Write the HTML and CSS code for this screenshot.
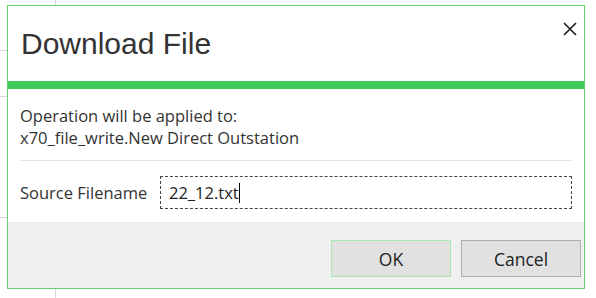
FILE: index.html
```html
<!DOCTYPE html>
<html>
<head>
<meta charset="utf-8" />
<title>Download File</title>
<link rel="stylesheet" href="styles.css">
</head>
<body>
<div class="grid">
<span class="vline"></span>
<span class="hline hline1"></span>
<span class="hline hline2"></span>
<span class="hline hline3"></span>
</div>
<div class="dialog">
<div class="header">
<h1 class="title">Download File</h1>
<span class="close">
<svg width="14" height="14" viewBox="0 0 14 14"><path d="M1 1 L13 13 M13 1 L1 13" stroke="#1a1a1a" stroke-width="1.6" fill="none" /></svg>
</span>
</div>
<div class="bar"></div>
<div class="content">
<p class="info">Operation will be applied to:<br />x70_file_write.New Direct Outstation</p>
<div class="row">
<label class="form_col" for="src">Source Filename</label>
<div class="field"><span class="value">22_12.txt</span><span class="caret"></span></div>
</div>
</div>
<div class="footer">
<button class="btn btn_ok">OK</button>
<button class="btn">Cancel</button>
</div>
</div>
</body>
</html>
```
FILE: styles.css
```css
body {
margin: 0;
width: 596px;
height: 298px;
background: #fff;
font-family: "Open Sans", "Noto Sans", sans-serif;
overflow: hidden;
position: relative; }
.grid .vline {
position: absolute;
left: 55px;
top: 0;
width: 1px;
height: 298px;
background: #d8d8d8; }
.grid .hline {
position: absolute;
left: 0;
width: 8px;
height: 1px;
background: #d8d8d8; }
.hline1 { top: 50px; }
.hline2 { top: 96px; }
.hline3 { top: 217px; }
.dialog {
position: absolute;
left: 7px;
top: 5px;
width: 576px;
height: 282px;
border: 1px solid #5fd36d;
background: #fff;
display: flex;
flex-direction: column; }
.header {
height: 75px;
display: flex;
justify-content: space-between;
align-items: flex-start; }
.title {
margin: 21px 0 0 13px;
font-family: "Liberation Sans", Arial, sans-serif;
font-weight: normal;
font-size: 30px;
color: #333; }
.close {
margin: 13px 7px 0 0; }
.bar {
height: 8px;
background: #3fca57; }
.content {
flex: 1;
padding: 0 12px 0 12px; }
.info {
margin: 16px 0 0 0;
padding-bottom: 11px;
border-bottom: 1px solid #e3e3e3;
font-size: 16.5px;
line-height: 22px;
color: #333; }
.row {
display: flex;
align-items: center;
margin-top: 15px; }
.form_col {
width: 141px;
font-size: 16.5px;
color: #333; }
.field {
width: 405px;
height: 31px;
border: 1px dashed #444;
display: flex;
align-items: center;
padding-left: 8px;
font-size: 16.5px;
color: #222; }
.caret {
display: inline-block;
width: 1px;
height: 20px;
background: #000; }
.footer {
height: 66px;
background: #f0f0f0;
border-top: 1px solid #e8e8e8;
display: flex;
justify-content: flex-end;
align-items: flex-start;
gap: 10px;
padding: 17px 3px 0 0;
box-sizing: border-box; }
.btn {
width: 120px;
height: 37px;
background: #e1e1e1;
border: 1px solid #adadad;
font-family: "Open Sans", "Noto Sans", sans-serif;
font-size: 17.5px;
color: #222; }
.btn_ok {
border-color: #a6e8b0; }
```
